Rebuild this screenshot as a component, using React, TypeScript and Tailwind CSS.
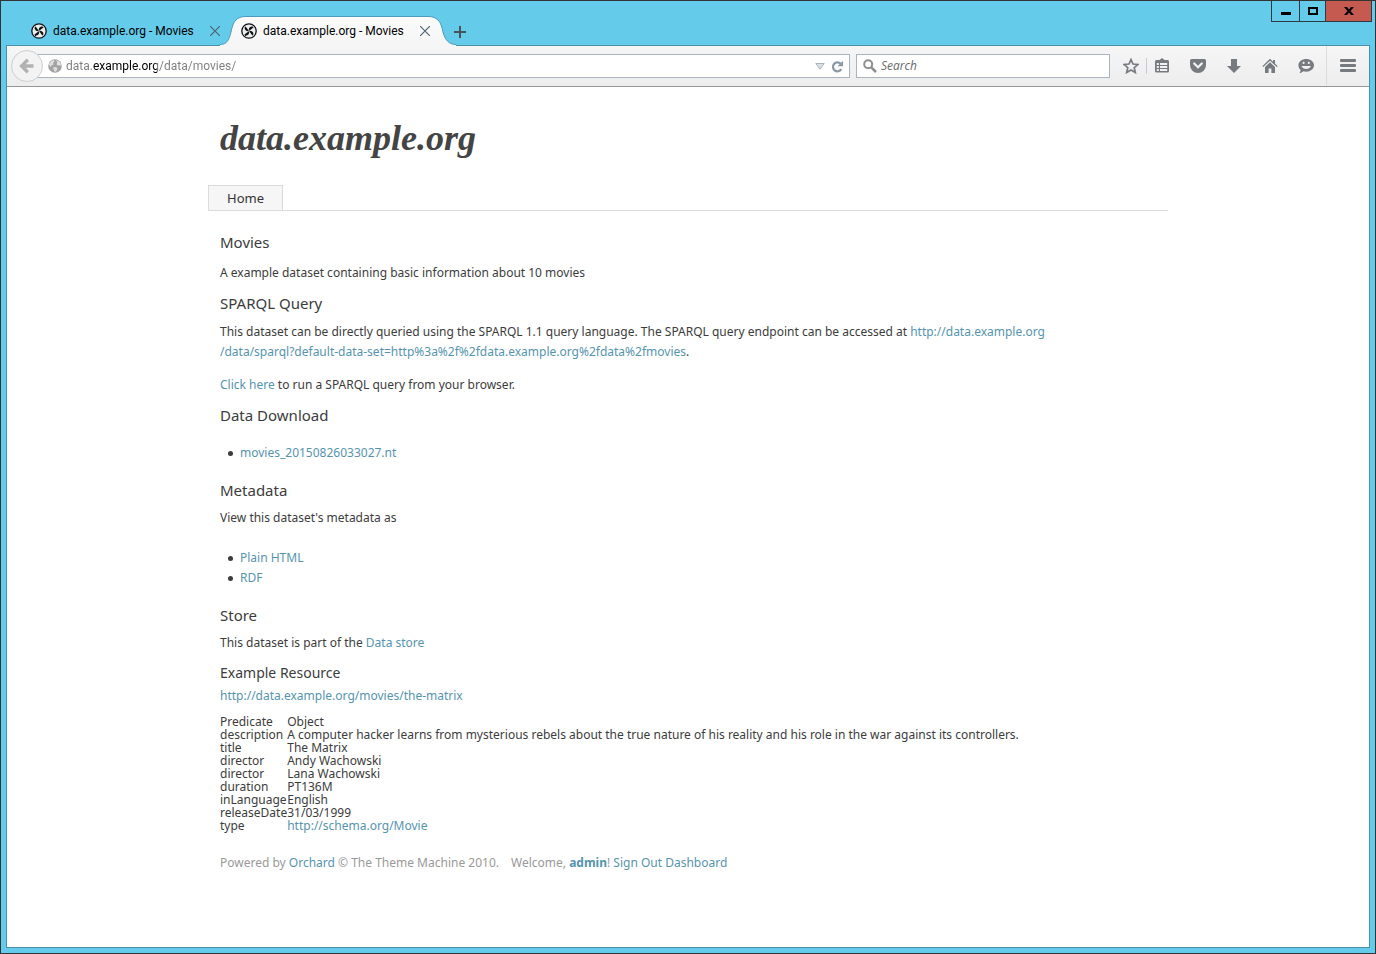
import React from "react";

function Favicon() {
  return (
    <svg width="16" height="16" viewBox="0 0 16 16" fill="none" aria-hidden="true" className="shrink-0">
      <circle cx="8" cy="8" r="7.2" fill="#e9eef0" stroke="#111" strokeWidth="1.3" />
      <g fill="#111">
        <path d="M7.800 8.200C6 8.600 4 7.500 3.600 5.600 3.500 4.600 4 3.800 4.800 3.500 5.200 5 7 5.800 7.800 8.200z" />
        <path d="M7.800 7.800C7.400 6 8.500 4 10.400 3.600 11.400 3.500 12.200 4 12.500 4.800 11 5.200 10.200 7 7.800 7.800z" />
        <path d="M8.200 7.800C10 7.400 12 8.500 12.400 10.400 12.500 11.400 12 12.200 11.200 12.500 10.800 11 9 10.200 8.200 7.800z" />
        <path d="M8.200 8.200C8.600 10 7.500 12 5.600 12.400 4.600 12.500 3.800 12 3.500 11.200 5 10.800 5.800 9 8.200 8.200z" />
      </g>
    </svg>
  );
}

function CloseGlyph() {
  return (
    <svg width="10" height="10" viewBox="0 0 10 10" fill="none" stroke="#4f6570" strokeWidth="1.200" aria-hidden="true">
      <path d="M0 0L10 10M10 0L0 10" />
    </svg>
  );
}

function Tab({ active = false }: { active?: boolean }) {
  return (
    <div className="relative flex h-[29px] w-[210px] items-center">
      {active && (
        <svg className="absolute -left-[21px] top-0" width="236" height="30" viewBox="0 0 236 30" fill="none" aria-hidden="true">
          <defs>
            <linearGradient id="tabFill" x1="0" y1="0" x2="0" y2="1">
              <stop offset="0" stopColor="#fbfbfb" />
              <stop offset="1" stopColor="#f5f5f5" />
            </linearGradient>
          </defs>
          <path
            d="M0 30V28.500C7 28.500 9 24 11 16C13 5 17 .5 26 .5H208C217 .5 221 5 223 16C225 24 229 28.500 236 28.500V30z"
            fill="url(#tabFill)"
          />
          <path
            d="M0 28.500C7 28.500 9 24 11 16C13 5 17 .5 26 .5H208C217 .5 221 5 223 16C225 24 229 28.500 236 28.500"
            stroke="#4a9cbd"
          />
        </svg>
      )}
      <button type="button" className="relative flex items-center gap-1.5 whitespace-nowrap font-['Roboto',sans-serif] text-xs text-black">
        <Favicon />
        data.example.org - Movies
      </button>
      <button type="button" aria-label="Close tab" className="relative ml-auto mr-[21px]">
        <CloseGlyph />
      </button>
    </div>
  );
}

function TitleBar() {
  return (
    <div className="flex h-11 items-end pl-[30px] pr-[3px]">
      <Tab />
      <Tab active />
      <button type="button" aria-label="Open a new tab" className="relative mb-[6px] ml-[2px]">
        <svg width="14" height="14" viewBox="0 0 14 14" fill="#49525a" aria-hidden="true">
          <path d="M6 1h2v5h5v2H8v5H6V8H1V6h5z" />
        </svg>
      </button>
      <div className="ml-auto flex h-[21px] self-start border border-t-0 border-[#2b3a42]">
        <button type="button" aria-label="Minimize" className="flex w-7 justify-center border-r border-[#2b3a42] pt-[11px]">
          <span className="h-[3px] w-2.5 bg-black" />
        </button>
        <button type="button" aria-label="Maximize" className="flex w-[26px] items-center justify-center border-r border-[#2b3a42]">
          <span className="h-2 w-2.5 border-2 border-black" />
        </button>
        <button type="button" aria-label="Close" className="flex w-[45px] items-center justify-center bg-[#c45a50]">
          <svg width="10" height="8" viewBox="0 0 10 8" aria-hidden="true">
            <path d="M0 0h3l2 2.500L7 0h3L6.500 4 10 8H7L5 5.500 3 8H0l3.500-4z" />
          </svg>
        </button>
      </div>
    </div>
  );
}

function ToolButton({ label, className, children }: { label: string; className: string; children: React.ReactNode }) {
  return (
    <button type="button" aria-label={label} className={`flex h-full shrink-0 items-center justify-center ${className}`}>
      <svg width="16" height="16" viewBox="0 0 16 16" fill="#777b80" aria-hidden="true">
        {children}
      </svg>
    </button>
  );
}

function Toolbar() {
  return (
    <div className="flex h-[41px] items-center border-b border-[#979797] bg-linear-to-b from-[#f6f6f6] to-[#ededed] pl-1">
      <button
        type="button"
        aria-label="Back"
        className="relative z-10 flex size-8 shrink-0 items-center justify-center rounded-full border border-[#cfcfcf] bg-[#f3f3f3]"
      >
        <svg width="16" height="16" viewBox="0 0 16 16" fill="none" stroke="#b2b2b2" strokeWidth="3.400" aria-hidden="true">
          <path d="M8.800 1.700L2.600 8l6.200 6.300M3 8h11.500" />
        </svg>
      </button>
      <div className="-ml-2 flex h-6 min-w-0 flex-1 items-center border border-[#aab4bf] bg-white pl-3 pr-[5px]">
        <svg width="14" height="14" viewBox="0 0 14 14" aria-hidden="true" className="shrink-0">
          <circle cx="7" cy="7" r="6.800" fill="#a3a3a3" />
          <path d="M.8 5L3.500 2 5.500 1 6.500 2.500 5 4 5.500 5.500 3.500 6.500 2.500 8z" fill="#dedede" />
          <path d="M8 1.200L11 2.200 13 5 12.500 7 11 6 9.500 6.500 8.500 5 9.500 3.500z" fill="#e2e2e2" />
          <path d="M5 8.500L8 8 9.500 9.500 8 12.800 6.500 12.500z" fill="#dedede" />
        </svg>
        <input
          aria-label="Address"
          defaultValue="data.example.org/data/movies/"
          className="ml-1 min-w-0 flex-1 bg-[linear-gradient(to_right,#7c7c7c_27px,#000_27px,#000_91px,#7c7c7c_91px)] bg-clip-text font-['Roboto',sans-serif] text-xs text-transparent caret-black outline-none"
        />
        <button type="button" aria-label="Show history" className="mr-1.5">
          <svg width="10" height="7" viewBox="0 0 10 7" fill="#dbe2e8" stroke="#a9b3bc" aria-hidden="true">
            <path d="M.8 .5H9.200L5 6.200z" />
          </svg>
        </button>
        <button type="button" aria-label="Reload">
          <svg width="13" height="13" viewBox="0 0 13 13" aria-hidden="true">
            <path d="M10.300 9.200A4.500 4.500 0 1 1 9.600 3.600" fill="none" stroke="#8b98a5" strokeWidth="2.200" />
            <path d="M12 .8V6.300H6.500z" fill="#8b98a5" />
          </svg>
        </button>
      </div>
      <div className="ml-1.5 flex h-6 w-[254px] shrink-0 items-center border border-[#aab4bf] bg-white pl-1.5">
        <svg width="14" height="14" viewBox="0 0 14 14" fill="none" stroke="#8e8e8e" aria-hidden="true" className="shrink-0">
          <circle cx="5.200" cy="5.200" r="4" strokeWidth="2" />
          <path d="M8.300 8.300L13 13" strokeWidth="2.600" />
        </svg>
        <input
          aria-label="Search"
          placeholder="Search"
          className="ml-1 min-w-0 flex-1 text-xs italic outline-none placeholder:text-[#6a6a6a]"
        />
      </div>
      <ToolButton label="Bookmark this page" className="ml-1.5 w-[30px]">
        <path
          d="M8 1.500L10 6l4.900.5-3.700 3.200 1.100 4.800L8 12l-4.300 2.500 1.100-4.800L1.100 6.500 6 6z"
          fill="none"
          stroke="#777b80"
          strokeWidth="1.700"
        />
      </ToolButton>
      <div className="h-4 w-px shrink-0 bg-[#c3ccd4]" />
      <ToolButton label="Bookmarks" className="mr-[3px] w-[30px]">
        <path
          fillRule="evenodd"
          d="M5.500 2L8 0l2.500 2H13.500A1.500 1.500 0 0 1 15 3.500v9.500A1.500 1.500 0 0 1 13.500 14.500h-11A1.500 1.500 0 0 1 1 13V3.500A1.500 1.500 0 0 1 2.500 2zM2.800 5v2h2V5zM6 5v2H13.200V5zM2.800 8V10h2V8zM6 8V10H13.200V8zM2.800 11v2h2v-2zM6 11v2H13.200v-2z"
        />
      </ToolButton>
      <ToolButton label="Save to Pocket" className="w-9">
        <path d="M1.500 1h13A1.500 1.500 0 0 1 16 2.500V7A8 8 0 0 1 0 7V2.500A1.500 1.500 0 0 1 1.500 1z" />
        <path d="M4.200 5.500L8 9.200l3.800-3.700" fill="none" stroke="#f3f3f3" strokeWidth="2.200" strokeLinecap="round" />
      </ToolButton>
      <ToolButton label="Downloads" className="w-9">
        <path d="M5 1h6v7h4l-7 7-7-7h4z" />
      </ToolButton>
      <ToolButton label="Home" className="w-9">
        <path d="M8 .8L.3 8.200l.9.9L8 2.700l6.800 6.400.9-.9L13 5.600V2h-2v1.700z" />
        <path d="M8 4.200L3 8.900v6.100h3.600v-4.500h2.800V15H13V8.900z" />
      </ToolButton>
      <ToolButton label="Chat" className="w-9">
        <path d="M8.200 1C12.500 1 16 3.600 16 7.300s-3.500 6.400-7.800 6.400c-1 0-2-.1-2.800-.4-1.200 1-2.600 1.800-4 1.900.8-.9 1.200-2 1.200-3.200C1.200 10.800.400 9.100.400 7.300.400 3.600 3.900 1 8.200 1z" />
        <circle cx="5.600" cy="4.900" r="1.100" fill="#f0f0f0" />
        <circle cx="10.800" cy="4.900" r="1.100" fill="#f0f0f0" />
        <path d="M3.500 8h9.400c-.6 2-2.500 3-4.700 3S4.100 10 3.500 8z" fill="#f0f0f0" />
      </ToolButton>
      <div className="ml-0.5 h-full w-px shrink-0 bg-[#dcdcdc]" />
      <ToolButton label="Open menu" className="w-[42px]">
        <rect y="1" width="16" height="3" rx="1" />
        <rect y="6" width="16" height="3" rx="1" />
        <rect y="11" width="16" height="3" rx="1" />
      </ToolButton>
    </div>
  );
}

function Link({ children, className = "" }: { children: React.ReactNode; className?: string }) {
  return (
    <a href="#" className={`text-[#5594b0] ${className}`}>
      {children}
    </a>
  );
}

function Heading({ children, className = "" }: { children: React.ReactNode; className?: string }) {
  return <h2 className={`text-[15px] leading-5 ${className}`}>{children}</h2>;
}

function LinkList({ items, className }: { items: string[]; className: string }) {
  return (
    <ul className={`pl-2 ${className}`}>
      {items.map((item) => (
        <li key={item} className="flex items-center gap-[7px] before:size-[5px] before:rounded-full before:bg-current">
          <Link>{item}</Link>
        </li>
      ))}
    </ul>
  );
}

const rows: [string, React.ReactNode][] = [
  ["description", "A computer hacker learns from mysterious rebels about the true nature of his reality and his role in the war against its controllers."],
  ["title", "The Matrix"],
  ["director", "Andy Wachowski"],
  ["director", "Lana Wachowski"],
  ["duration", "PT136M"],
  ["inLanguage", "English"],
  ["releaseDate", "31/03/1999"],
  ["type", <Link>http://schema.org/Movie</Link>],
];

function Page() {
  return (
    <div className="mx-auto w-full max-w-[960px] pb-8 pt-[26px] font-['Noto_Sans',sans-serif] text-xs leading-5 text-[#3c3c3c]">
      <h1 className="px-3 font-['Liberation_Serif',serif] text-4xl font-bold italic leading-[50px] text-[#444]">data.example.org</h1>
      <nav className="mt-[22px] flex border-b border-[#dbdbdb]">
        <a href="#" className="border border-b-0 border-[#dbdbdb] bg-[#f6f6f6] px-[18px] py-[2px] text-[13px] leading-5 text-[#333]">
          Home
        </a>
      </nav>
      <main className="px-3 pt-[21px]">
        <Heading>Movies</Heading>
        <p className="mt-[11px]">A example dataset containing basic information about 10 movies</p>
        <Heading className="mt-2.5">SPARQL Query</Heading>
        <p className="mt-[9px]">
          This dataset can be directly queried using the SPARQL 1.1 query language. The SPARQL query endpoint can be accessed at{" "}
          <Link>
            http://data.example.org
            <br />
            /data/sparql?default-data-set=http%3a%2f%2fdata.example.org%2fdata%2fmovies
          </Link>
          .
        </p>
        <p className="mt-[13px]">
          <Link>Click here</Link> to run a SPARQL query from your browser.
        </p>
        <Heading className="mt-2.5">Data Download</Heading>
        <LinkList className="mt-[18px]" items={["movies_20150826033027.nt"]} />
        <Heading className="mt-[17px]">Metadata</Heading>
        <p className="mt-2">View this dataset's metadata as</p>
        <LinkList className="mt-5" items={["Plain HTML", "RDF"]} />
        <Heading className="mt-[17px]">Store</Heading>
        <p className="mt-2">
          This dataset is part of the <Link>Data store</Link>
        </p>
        <h3 className="mt-2.5 text-sm leading-5">Example Resource</h3>
        <p className="mt-[3px]">
          <Link>http://data.example.org/movies/the-matrix</Link>
        </p>
        <table className="mt-[9px] border-collapse leading-[13px]">
          <thead>
            <tr>
              <th className="p-0 text-left font-normal">Predicate</th>
              <th className="p-0 text-left font-normal">Object</th>
            </tr>
          </thead>
          <tbody>
            {rows.map(([predicate, object], i) => (
              <tr key={i}>
                <td className="p-0">{predicate}</td>
                <td className="p-0">{object}</td>
              </tr>
            ))}
          </tbody>
        </table>
      </main>
      <footer className="flex gap-3 px-3 pt-[21px] text-[#999]">
        <span>
          Powered by <Link>Orchard</Link> © The Theme Machine 2010.
        </span>
        <span>
          Welcome, <Link className="font-bold">admin</Link>! <Link>Sign Out</Link> <Link>Dashboard</Link>
        </span>
      </footer>
    </div>
  );
}

export default function App() {
  return (
    <div className="flex min-h-screen flex-col border border-[#333] bg-[#65cbea] font-['Open_Sans','Noto_Sans',sans-serif]">
      <TitleBar />
      <div className="mx-[5px] mb-[5px] flex flex-1 flex-col border border-[#4a8fab] bg-white">
        <Toolbar />
        <Page />
      </div>
    </div>
  );
}
